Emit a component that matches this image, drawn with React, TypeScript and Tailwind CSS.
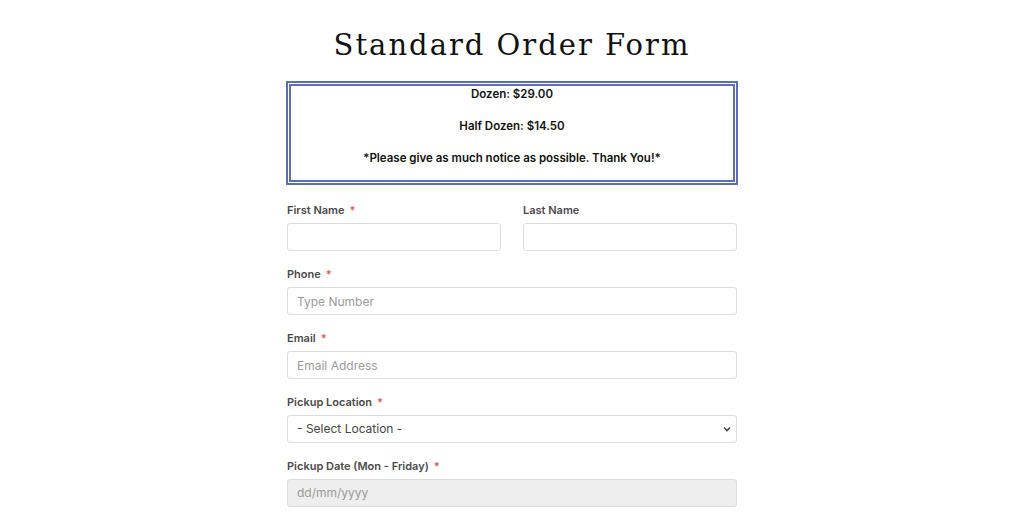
export default function App() {
  const label = 'block text-[11px] font-semibold text-[#4a4a4a] leading-[14px] mb-[6px]'
  const input = 'block w-full h-[28px] rounded-[3px] border border-[#dcdcdc] bg-white px-[9px] text-[12px] text-[#333] placeholder:text-[#9a9a9a] outline-none'
  const star = <span className="text-[#e05a5a] ml-[5px]">*</span>

  return (
    <div className="min-h-screen w-full bg-white" style={{ fontFamily: 'Inter, "Open Sans", sans-serif' }}>
      <div className="w-[452px] mx-auto pt-[26px]">
        <h1 className="text-center text-[29px] leading-[38px] tracking-[2px] text-[#111]" style={{ fontFamily: '"DejaVu Serif", serif' }}>
          Standard Order Form
        </h1>

        <div className="mt-[17px] border-[5px] border-double border-[#5f6cb6] pt-0 pb-[14px] text-center text-[11.5px] font-semibold text-[#111] leading-[16px] flex flex-col gap-[16px]">
          <p>Dozen: $29.00</p>
          <p>Half Dozen: $14.50</p>
          <p>*Please give as much notice as possible. Thank You!*</p>
        </div>

        <div className="mx-[1px] mt-[18px] flex flex-col gap-[16px]">
          <div className="grid grid-cols-2 gap-[22px]">
            <div>
              <label className={label}>First Name{star}</label>
              <input className={input} />
            </div>
            <div>
              <label className={label}>Last Name</label>
              <input className={input} />
            </div>
          </div>
          <div>
            <label className={label}>Phone{star}</label>
            <input className={input} placeholder="Type Number" />
          </div>
          <div>
            <label className={label}>Email{star}</label>
            <input className={input} placeholder="Email Address" />
          </div>
          <div>
            <label className={label}>Pickup Location{star}</label>
            <div className="relative">
              <select className={input + ' appearance-none text-[#444]'} defaultValue="">
                <option value="">- Select Location -</option>
              </select>
              <svg className="absolute right-[6px] top-[11px] w-[8px] h-[6px]" viewBox="0 0 8 6" fill="none" stroke="#444" strokeWidth="1.6">
                <path d="M1 1.5l3 3 3-3" />
              </svg>
            </div>
          </div>
          <div>
            <label className={label}>Pickup Date (Mon - Friday){star}</label>
            <div className="h-[28px] rounded-[3px] border border-[#dcdcdc] bg-[#eeeeee] px-[9px] text-[12px] leading-[26px] text-[#9a9a9a]">
              dd/mm/yyyy
            </div>
          </div>
        </div>
      </div>
    </div>
  )
}
